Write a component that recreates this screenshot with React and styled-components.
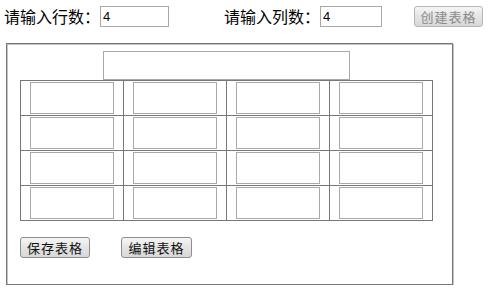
import React from "react";
import styled, { createGlobalStyle } from "styled-components";

const GlobalStyle = createGlobalStyle`
  body {
    margin: 0;
    background: #fff;
    font-family: "Noto Sans CJK SC", "Liberation Sans", sans-serif;
  }
`;

const Toolbar = styled.div`
  display: flex;
  align-items: center;
  height: 27px;
  padding: 6px 0 0 4px;
  box-sizing: border-box;
`;

const Label = styled.span`
  font-size: 16px;
  line-height: 21px;
  color: #000;
  margin-left: ${(props) => props.gap || 0}px;
  white-space: nowrap;
`;

const NumInput = styled.input`
  width: ${(props) => props.w}px;
  height: 21px;
  box-sizing: border-box;
  border: 1px solid #a9a9a9;
  padding: 0 2px;
  margin: 0;
  font-family: "Liberation Sans", sans-serif;
  font-size: 13px;
  color: #000;
  outline: none;
`;

const Button = styled.button`
  width: ${(props) => props.w || 70}px;
  height: 21px;
  box-sizing: border-box;
  margin: 0 0 0 ${(props) => props.gap || 0}px;
  padding: 0;
  border: 1px solid ${(props) => (props.disabled ? "#b5b5b5" : "#8e8e8e")};
  border-radius: 3px;
  background: linear-gradient(#f6f6f6, #e4e4e4 50%, #d8d8d8);
  color: ${(props) => (props.disabled ? "#8a8a8a" : "#111")};
  font-family: "Noto Sans CJK SC", sans-serif;
  font-size: 13px;
  line-height: 19px;
  letter-spacing: 1px;
`;

const Frame = styled.div`
  width: 447px;
  height: 242px;
  box-sizing: border-box;
  margin: 16px 0 0 6px;
  padding: 7px 0 0 13px;
  border: 1px solid #777;
  box-shadow: inset 1px 1px 0 #c4c4c4, 1px 1px 0 #c4c4c4;
`;

const Sheet = styled.div`
  width: 413px;
  display: flex;
  flex-direction: column;
  align-items: center;
`;

const TitleInput = styled.input`
  width: 247px;
  height: 29px;
  box-sizing: border-box;
  margin: 0;
  border: 1px solid #a9a9a9;
  outline: none;
`;

const Table = styled.table`
  border-collapse: collapse;
  border: 1px solid #777;
`;

const Td = styled.td`
  border: 1px solid #777;
  padding: 1px 9px;
  width: 84px;
`;

const CellInput = styled.input`
  display: block;
  width: 84px;
  height: 32px;
  box-sizing: border-box;
  margin: 0;
  border: 1px solid #a9a9a9;
  outline: none;
`;

const Actions = styled.div`
  display: flex;
  margin-top: 16px;
`;

const rows = [0, 1, 2, 3];
const cols = [0, 1, 2, 3];

const App = () => {
  return (
    <>
      <GlobalStyle />
      <Toolbar>
        <Label>请输入行数：</Label>
        <NumInput w={69} defaultValue="4" />
        <Label gap={55}>请输入列数：</Label>
        <NumInput w={62} defaultValue="4" />
        <Button w={69} gap={32} disabled>
          创建表格
        </Button>
      </Toolbar>
      <Frame>
        <Sheet>
          <TitleInput />
          <Table>
            <tbody>
              {rows.map((r) => (
                <tr key={r}>
                  {cols.map((c) => (
                    <Td key={c}>
                      <CellInput />
                    </Td>
                  ))}
                </tr>
              ))}
            </tbody>
          </Table>
        </Sheet>
        <Actions>
          <Button w={70}>保存表格</Button>
          <Button w={71} gap={31}>
            编辑表格
          </Button>
        </Actions>
      </Frame>
    </>
  );
};

export default App;
